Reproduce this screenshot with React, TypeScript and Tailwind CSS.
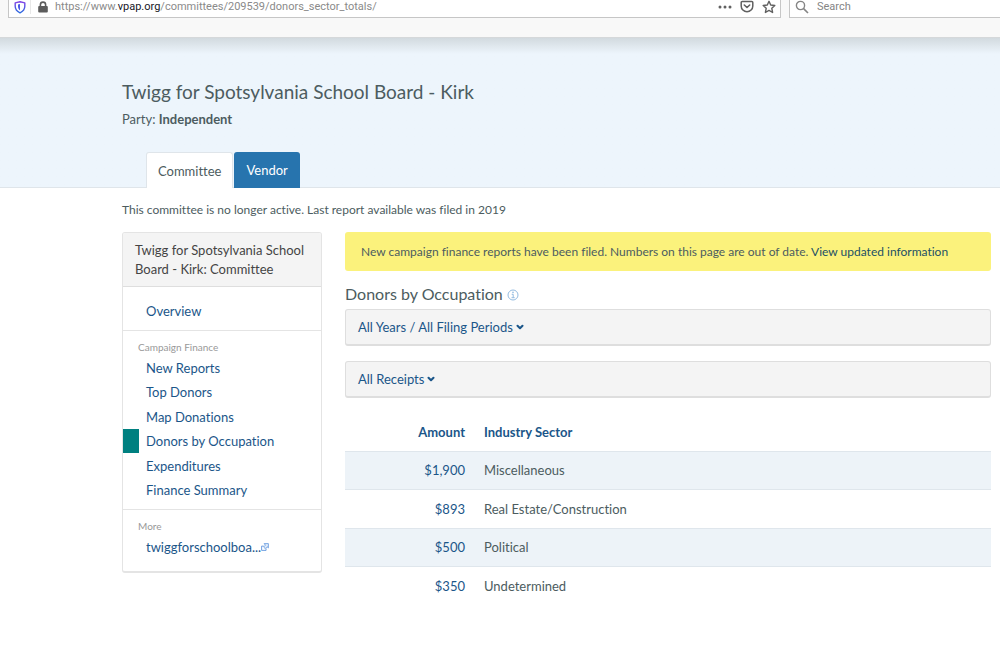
import { ChevronDown } from "lucide-react";
import type { ReactNode } from "react";

const financeLinks = [
  "New Reports",
  "Top Donors",
  "Map Donations",
  "Donors by Occupation",
  "Expenditures",
  "Finance Summary",
];

const sectors = [
  { amount: "$1,900", name: "Miscellaneous" },
  { amount: "$893", name: "Real Estate/Construction" },
  { amount: "$500", name: "Political" },
  { amount: "$350", name: "Undetermined" },
];

function ShieldIcon() {
  return (
    <svg viewBox="0 0 12 14" className="h-3.5 w-3" fill="none" aria-hidden="true">
      <defs>
        <linearGradient id="shield" x1="0" y1="0" x2="0" y2="1">
          <stop offset="0" stopColor="#8243e6" />
          <stop offset="1" stopColor="#2b6be0" />
        </linearGradient>
      </defs>
      <path d="M6 1.7 10.8 2.9V6.3C10.8 9.6 8.9 11.5 6 12.8 3.1 11.5 1.2 9.6 1.2 6.3V2.9Z" stroke="url(#shield)" strokeWidth="1.4" strokeLinejoin="round" />
      <path d="M6 3.9 4 4.4V6.5C4 8.5 4.8 9.5 6 10.3Z" fill="#4c5be6" />
    </svg>
  );
}

function LockIcon() {
  return (
    <svg viewBox="0 0 10 12" className="h-3 w-2.5" aria-hidden="true">
      <path d="M2.4 6V3.7a2.6 2.6 0 0 1 5.2 0V6" fill="none" stroke="#5c5c5c" strokeWidth="1.6" />
      <rect x="0.2" y="5" width="9.6" height="6.6" rx="1" fill="#5c5c5c" />
    </svg>
  );
}

function PocketIcon() {
  return (
    <svg viewBox="0 0 14 13" className="h-[13px] w-3.5" fill="none" stroke="#606060" strokeLinecap="round" strokeLinejoin="round" aria-hidden="true">
      <path d="M2.2 1.5h9.6a1 1 0 0 1 1 1v3.4a5.8 5.8 0 0 1-11.6 0V2.5a1 1 0 0 1 1-1Z" strokeWidth="1.5" />
      <path d="M4.3 5 7 7.5 9.7 5" strokeWidth="1.6" />
    </svg>
  );
}

function StarIcon() {
  return (
    <svg viewBox="0 0 14 14" className="size-3.5" fill="none" stroke="#606060" strokeWidth="1.4" strokeLinejoin="round" aria-hidden="true">
      <path d="M7 1.3 8.7 5l4.1.5-3 2.8.8 4.2L7 10.4l-3.6 2.1.8-4.2-3-2.8L5.3 5Z" />
    </svg>
  );
}

function SearchIcon() {
  return (
    <svg viewBox="0 0 14 14" className="size-3.5" fill="none" stroke="#858585" aria-hidden="true">
      <circle cx="5.5" cy="5.5" r="4.1" strokeWidth="1.4" />
      <path d="m8.6 8.6 4.4 4.4" strokeWidth="1.6" />
    </svg>
  );
}

function InfoIcon() {
  return (
    <svg viewBox="0 0 12 12" className="size-3" fill="none" stroke="#93bbe0" aria-hidden="true">
      <circle cx="6" cy="6" r="5" strokeWidth="1" />
      <path d="M4.7 5.3H6.2V8.7M4.5 8.7H7.7" strokeWidth="1" />
      <circle cx="6" cy="3.4" r=".8" fill="#93bbe0" stroke="none" />
    </svg>
  );
}

function ExternalIcon() {
  return (
    <svg viewBox="0 0 9 9" className="size-2" fill="none" stroke="#5c93dc" aria-hidden="true">
      <path d="M3 3.5H.7V8.3H5.7V6" strokeWidth="1" />
      <path d="M3.5.7H8.3V5.5L6.8 4.2 4.8 6.3 2.9 4.5 5 2.4Z" fill="#e4eefb" strokeWidth=".9" />
    </svg>
  );
}

function BrowserBar() {
  return (
    <div className="flex h-[38px] items-start gap-2 border-b border-[#d5d8da] bg-[#f8f8f8] pl-2">
      <div className="flex h-[18px] min-w-0 flex-1 items-center border border-t-0 border-[#c6c6c6] bg-white pr-1 pb-1">
        <span className="flex w-[22px] justify-center border-r border-[#e8e8e8]">
          <ShieldIcon />
        </span>
        <span className="flex w-6 justify-center">
          <LockIcon />
        </span>
        <div
          role="textbox"
          aria-label="Address"
          contentEditable
          suppressContentEditableWarning
          spellCheck={false}
          className="min-w-0 flex-1 truncate pt-px text-[11px] leading-4 text-[#8a8a8a] outline-none"
        >
          https://www.<span className="text-[#17171f]">vpap.org</span>/committees/209539/donors_sector_totals/
        </div>
        <div className="flex items-center gap-2">
          <button type="button" aria-label="Page actions" className="flex w-3.5 justify-center">
            <svg viewBox="0 0 14 4" className="h-1 w-3.5" fill="#606060" aria-hidden="true">
              <circle cx="2" cy="2" r="1.5" />
              <circle cx="7" cy="2" r="1.5" />
              <circle cx="12" cy="2" r="1.5" />
            </svg>
          </button>
          <button type="button" aria-label="Save to Pocket">
            <PocketIcon />
          </button>
          <button type="button" aria-label="Bookmark this page">
            <StarIcon />
          </button>
        </div>
      </div>
      <label className="flex h-[18px] w-[211px] items-center gap-2 border border-t-0 border-r-0 border-[#c6c6c6] bg-white pb-1 pl-[5px]">
        <SearchIcon />
        <input
          type="search"
          aria-label="Search"
          placeholder="Search"
          className="h-4 min-w-0 flex-1 pt-px text-[11px] leading-4 outline-none placeholder:text-[#858585]"
        />
      </label>
    </div>
  );
}

function SideLink({ children, active = false }: { children: ReactNode; active?: boolean }) {
  return (
    <li className={active ? "flex h-6 items-center border-l-16 border-[#008080] pl-[7px]" : "flex h-6 items-center pl-[23px]"}>
      <a href="#" aria-current={active ? "page" : undefined} className="text-[#1b5689]">
        {children}
      </a>
    </li>
  );
}

function Sidebar() {
  return (
    <nav aria-label="Committee" className="w-[200px] shrink-0 overflow-hidden rounded-[3px] border border-b-2 border-[#e4e4e4] bg-white">
      <h2 className="border-b border-[#dedede] bg-[#f4f4f4] px-3 pt-2 pb-[7px] leading-[19px] text-[#444]">
        Twigg for Spotsylvania School Board - Kirk: Committee
      </h2>
      <ul className="border-b border-[#e4e4e4] pt-3 pb-[7px]">
        <SideLink>Overview</SideLink>
      </ul>
      <div className="border-b border-[#e4e4e4] pt-[7px] pb-[7px]">
        <h3 className="pl-[15px] text-[10px] leading-[18px] text-[#999]">Campaign Finance</h3>
        <ul className="flex h-[146px] flex-col justify-between">
          {financeLinks.map((label) => (
            <SideLink key={label} active={label === "Donors by Occupation"}>
              {label}
            </SideLink>
          ))}
        </ul>
      </div>
      <div className="pt-[7px] pb-3">
        <h3 className="pl-[15px] text-[10px] leading-[18px] text-[#999]">More</h3>
        <ul>
          <SideLink>
            <span className="flex items-center">
              twiggforschoolboa...
              <ExternalIcon />
            </span>
          </SideLink>
        </ul>
      </div>
    </nav>
  );
}

function Filter({ label }: { label: string }) {
  return (
    <div className="flex h-[37px] items-center rounded-[3px] border border-b-2 border-[#dedede] bg-[#f4f4f4] px-3">
      <button type="button" aria-haspopup="listbox" className="flex items-center gap-0.5 text-[#1b5689]">
        {label}
        <ChevronDown className="size-2.5" strokeWidth={5} aria-hidden="true" />
      </button>
    </div>
  );
}

export default function App() {
  return (
    <div className="min-h-screen bg-white font-[Roboto,sans-serif]">
      <BrowserBar />
      <div className="font-[Lato,sans-serif] text-[13px] leading-5 text-[#4c5c60] [font-variant-ligatures:none]">
        <header className="border-b border-[#dfe5ea] bg-[#edf5fc] bg-linear-to-b from-[#d2dadf] to-[#edf5fc] to-[16px] pt-10 pr-[9px] pl-[122px]">
          <h1 className="text-[19px] leading-7">Twigg for Spotsylvania School Board - Kirk</h1>
          <p className="pt-[3px]">
            Party: <strong className="font-bold">Independent</strong>
          </p>
          <div role="tablist" className="-mb-px flex gap-px pt-[23px] pl-6">
            <button type="button" role="tab" aria-selected="true" className="h-9 rounded-t-[3px] border border-b-0 border-[#dfe5ea] bg-white px-[11px]">
              Committee
            </button>
            <button type="button" role="tab" aria-selected="false" className="h-9 rounded-t-[3px] bg-[#2774ae] px-3 text-white">
              Vendor
            </button>
          </div>
        </header>
        <main className="pt-3 pr-[9px] pl-[122px]">
          <p className="text-[12px]">This committee is no longer active. Last report available was filed in 2019</p>
          <div className="flex items-start gap-[23px] pt-3">
            <Sidebar />
            <section className="min-w-0 flex-1">
              <p className="rounded-[3px] bg-[#fbf27c] px-4 pt-2.5 pb-[9px] text-[12px] leading-5">
                New campaign finance reports have been filed. Numbers on this page are out of date.{" "}
                <a href="#" className="text-[#1b5064]">
                  View updated information
                </a>
              </p>
              <h2 className="flex items-center gap-1 pt-3 pb-1 text-[16px] leading-[22px]">
                Donors by Occupation
                <button type="button" aria-label="About donors by occupation" className="pt-0.5">
                  <InfoIcon />
                </button>
              </h2>
              <div className="flex flex-col gap-[15px]">
                <Filter label="All Years / All Filing Periods" />
                <Filter label="All Receipts" />
              </div>
              <table className="mt-[15px] h-48 w-full border-collapse">
                <thead>
                  <tr className="text-[#1b5689]">
                    <th scope="col" className="h-[38px] w-[120px] text-right font-bold">
                      Amount
                    </th>
                    <th scope="col" className="pl-[19px] text-left font-bold">
                      Industry Sector
                    </th>
                  </tr>
                </thead>
                <tbody>
                  {sectors.map((sector) => (
                    <tr key={sector.name} className="h-[38px] border-t border-[#dfe6ec] odd:bg-[#edf3f8]">
                      <td className="text-right">
                        <a href="#" className="text-[#1b5689]">
                          {sector.amount}
                        </a>
                      </td>
                      <td className="pl-[19px]">{sector.name}</td>
                    </tr>
                  ))}
                </tbody>
              </table>
            </section>
          </div>
        </main>
      </div>
    </div>
  );
}
